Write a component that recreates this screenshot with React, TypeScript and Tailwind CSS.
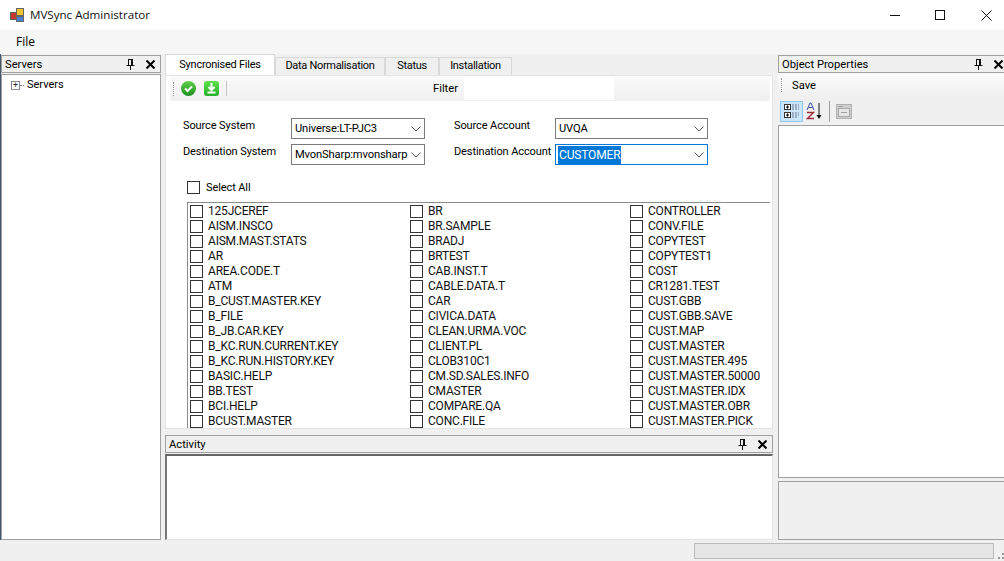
const col1 = ['125JCEREF', 'AISM.INSCO', 'AISM.MAST.STATS', 'AR', 'AREA.CODE.T', 'ATM', 'B_CUST.MASTER.KEY', 'B_FILE', 'B_JB.CAR.KEY', 'B_KC.RUN.CURRENT.KEY', 'B_KC.RUN.HISTORY.KEY', 'BASIC.HELP', 'BB.TEST', 'BCI.HELP', 'BCUST.MASTER']
const col2 = ['BR', 'BR.SAMPLE', 'BRADJ', 'BRTEST', 'CAB.INST.T', 'CABLE.DATA.T', 'CAR', 'CIVICA.DATA', 'CLEAN.URMA.VOC', 'CLIENT.PL', 'CLOB310C1', 'CM.SD.SALES.INFO', 'CMASTER', 'COMPARE.QA', 'CONC.FILE']
const col3 = ['CONTROLLER', 'CONV.FILE', 'COPYTEST', 'COPYTEST1', 'COST', 'CR1281.TEST', 'CUST.GBB', 'CUST.GBB.SAVE', 'CUST.MAP', 'CUST.MASTER', 'CUST.MASTER.495', 'CUST.MASTER.50000', 'CUST.MASTER.IDX', 'CUST.MASTER.OBR', 'CUST.MASTER.PICK']

function PinClose() {
  return (
    <div className="flex items-center gap-[11px]">
      <svg width="9" height="11" viewBox="0 0 9 11" fill="none" stroke="#111">
        <path d="M2.5 1v5M6.5 1v5M2 .5h5M.5 6.5h8M4.5 7v4" />
        <path d="M5.5 1v5" />
      </svg>
      <svg width="9" height="9" viewBox="0 0 9 9" fill="none" stroke="#000" strokeWidth="2">
        <path d="M.5 .5l8 8M8.5 .5l-8 8" />
      </svg>
    </div>
  )
}

function PanelHeader({ title, open }: { title: string; open?: boolean }) {
  return (
    <div className={`flex h-[18px] shrink-0 items-center justify-between border border-[#a0a0a0] bg-[#f0f0f0] pl-[3px] text-[11.2px] text-black ${open ? 'border-r-0 pr-px' : 'pr-[5px]'}`}>
      <span className="pt-[3px]">{title}</span>
      <PinClose />
    </div>
  )
}

function Box() {
  return <span className="block h-[13px] w-[13px] shrink-0 border border-[#333] bg-white" />
}

function FileColumn({ items, width }: { items: string[]; width: string }) {
  return (
    <div className={`flex shrink-0 flex-col ${width}`}>
      {items.map((name) => (
        <div key={name} className="flex h-[15px] items-center gap-[5px] whitespace-nowrap text-[12px] leading-[15px] tracking-[-0.2px] text-[#111]">
          <Box />
          <span>{name}</span>
        </div>
      ))}
    </div>
  )
}

function Combo({ value, width, selected }: { value: string; width: string; selected?: boolean }) {
  return (
    <div className={`flex h-[21px] items-center justify-between whitespace-nowrap bg-white pl-[2px] pr-[3px] text-[11.2px] tracking-[-0.15px] text-black ${width} border ${selected ? 'border-[#0078d7]' : 'border-[#7a7a7a]'}`}>
      {selected ? <span className="bg-[#0078d7] px-px text-[12px] text-white">{value}</span> : <span className="pl-px pt-[2px]">{value}</span>}
      <svg width="10" height="6" viewBox="0 0 10 6" fill="none" stroke="#555">
        <path d="M.5 .5l4.5 4.5 4.5-4.5" />
      </svg>
    </div>
  )
}

function Tab({ label, width }: { label: string; width: string }) {
  return (
    <div className={`flex h-[18px] items-center justify-center border border-b-0 border-[#d9d9d9] bg-[#f0f0f0] text-[11px] tracking-[-0.3px] text-black ${width}`}>
      {label}
    </div>
  )
}

export default function App() {
  return (
    <div className="flex h-[561px] w-[1004px] flex-col overflow-hidden bg-[#f0f0f0] font-['Roboto',sans-serif]">
      {/* title bar */}
      <div className="flex h-[30px] shrink-0 items-center justify-between bg-white">
        <div className="flex items-center gap-[6px] pl-[10px]">
          <svg width="14" height="14" viewBox="0 0 14 14">
            <rect x="0.5" y="4.5" width="6" height="7" fill="#c0392b" stroke="#666" />
            <rect x="6.5" y="0.5" width="7" height="7" fill="#f4c430" stroke="#666" />
            <rect x="6.5" y="8.5" width="7" height="5" fill="#4a80d0" stroke="#666" />
          </svg>
          <span className="font-['Open_Sans',sans-serif] text-[11.6px] text-[#111]">MVSync Administrator</span>
        </div>
        <div className="flex items-center gap-[35px] pr-[12px]">
          <span className="block h-px w-[10px] bg-[#111]" />
          <span className="block h-[10px] w-[10px] border border-[#111]" />
          <svg className="ml-px" width="11" height="11" viewBox="0 0 11 11" stroke="#111" fill="none">
            <path d="M.5 .5l10 10M10.5 .5l-10 10" />
          </svg>
        </div>
      </div>

      {/* menu */}
      <div className="flex h-[24px] shrink-0 items-center bg-[#f6f6f6] pl-[16px] font-['Open_Sans',sans-serif] text-[12px] text-black">File</div>

      {/* body */}
      <div className="flex min-h-0 flex-1 bg-[#f0f0f0]">
        <div className="w-px shrink-0 bg-[#44586b]" />

        {/* servers */}
        <div className="flex w-[160px] shrink-0 flex-col pt-px">
          <PanelHeader title="Servers" />
          <div className="mt-px flex-1 border border-[#a0a0a0] bg-white pl-[9px] pt-[3px]">
            <div className="flex items-center text-[11px] leading-[14px] text-black">
              <span className="flex h-[9px] w-[9px] items-center justify-center border border-[#8a8a9a] text-[9px] leading-none text-[#333]">+</span>
              <span className="w-[4px] border-t border-dotted border-[#888]" />
              <span className="pl-[3px]">Servers</span>
            </div>
          </div>
        </div>

        {/* centre */}
        <div className="ml-[4px] flex w-[608px] shrink-0 flex-col">
          <div className="flex h-[21px] shrink-0 items-end pt-px">
            <div className="flex h-[21px] w-[110px] items-center justify-center border border-b-0 border-[#d9d9d9] bg-white text-[11px] tracking-[-0.25px] text-black">Syncronised Files</div>
            <Tab label="Data Normalisation" width="w-[110px]" />
            <Tab label="Status" width="w-[54px]" />
            <Tab label="Installation" width="w-[73px]" />
          </div>

          <div className="flex h-[354px] shrink-0 flex-col overflow-hidden border border-[#e4e4e4] bg-white pl-[4px] pr-[2px]">
            {/* toolbar */}
            <div className="flex h-[25px] shrink-0 items-center rounded-b-[3px] bg-gradient-to-b from-[#fbfbfb] to-[#efefef] pl-[3px]">
              <span className="mr-[7px] h-[14px] w-px border-l border-dotted border-[#999]" />
              <svg width="15" height="15" viewBox="0 0 15 15">
                <defs>
                  <linearGradient id="okFill" x1="0" y1="0" x2="0" y2="1">
                    <stop offset="0" stopColor="#5fd04a" />
                    <stop offset="1" stopColor="#1d8f22" />
                  </linearGradient>
                </defs>
                <circle cx="7.5" cy="7.5" r="7.5" fill="url(#okFill)" />
                <path d="M4 7.5l2.5 2.5L11 5.5" stroke="#fff" strokeWidth="2" fill="none" />
              </svg>
              <svg className="ml-[8px]" width="15" height="15" viewBox="0 0 15 15">
                <defs>
                  <linearGradient id="dlFill" x1="0" y1="0" x2="0" y2="1">
                    <stop offset="0" stopColor="#5fe04a" />
                    <stop offset="1" stopColor="#24b02a" />
                  </linearGradient>
                </defs>
                <rect width="15" height="15" rx="3" fill="url(#dlFill)" />
                <path d="M7.5 2v6M4.5 6l3 3 3-3M3.5 11.5h8" stroke="#fff" strokeWidth="2" fill="none" />
              </svg>
              <span className="ml-[7px] h-[15px] w-px bg-[#c4c4c4]" />
              <span className="ml-[206px] w-[31px] pt-px text-[11.2px] text-black">Filter</span>
              <span className="h-[24px] w-[150px] self-start bg-white" />
            </div>

            {/* form */}
            <div className="flex h-[101px] shrink-0 flex-col pl-[13px] text-[11px] tracking-[-0.1px] text-black">
              <div className="mt-[17px] flex gap-x-[29px] whitespace-nowrap">
                <div className="flex flex-col gap-[5px]">
                  <div className="flex">
                    <span className="w-[108px]">Source System</span>
                    <Combo value="Universe:LT-PJC3" width="w-[134px]" />
                  </div>
                  <div className="flex">
                    <span className="w-[108px]">Destination System</span>
                    <Combo value="MvonSharp:mvonsharp" width="w-[134px]" />
                  </div>
                </div>
                <div className="flex flex-col gap-[5px]">
                  <div className="flex">
                    <span className="w-[101px]">Source Account</span>
                    <Combo value="UVQA" width="w-[153px]" />
                  </div>
                  <div className="flex">
                    <span className="w-[101px]">Destination Account</span>
                    <Combo value="CUSTOMER" width="w-[153px]" selected />
                  </div>
                </div>
              </div>
              <div className="ml-[4px] mt-[14px] flex items-center gap-[6px]">
                <Box />
                <span className="pt-px">Select All</span>
              </div>
            </div>

            {/* file list */}
            <div className="ml-[17px] flex min-h-0 flex-1 overflow-hidden border-l border-t border-[#8c8c8c] pl-[2px] pt-px">
              <FileColumn items={col1} width="w-[220px]" />
              <FileColumn items={col2} width="w-[220px]" />
              <FileColumn items={col3} width="w-[140px]" />
            </div>
          </div>

          {/* activity */}
          <div className="mt-[6px] flex min-h-0 flex-1 flex-col">
            <PanelHeader title="Activity" />
            <div className="mt-px flex-1 border-l-2 border-t-2 border-r border-b border-l-[#777] border-t-[#666] border-r-[#e4e4e4] border-b-[#e4e4e4] bg-white" />
          </div>
        </div>

        {/* properties */}
        <div className="ml-[5px] flex min-w-0 flex-1 flex-col pt-px">
          <PanelHeader title="Object Properties" open />
          <div className="flex h-[24px] shrink-0 items-center bg-gradient-to-b from-[#fbfbfb] to-[#f0f0f0] pl-[3px] text-[11.2px] text-black">
            <span className="h-[14px] border-l border-dotted border-[#999]" />
            <span className="pl-[10px] pt-[2px]">Save</span>
          </div>
          <div className="flex h-[28px] shrink-0 items-center bg-[#f0f0f0] pl-[2px]">
            <span className="flex h-[21px] w-[23px] items-center justify-center border border-[#90c8f6] bg-[#cce4f7]">
              <svg width="16" height="16" viewBox="0 0 16 16" fill="none">
                <rect x="0.5" y="1.5" width="6" height="5" fill="#fff" stroke="#333" />
                <rect x="0.5" y="9.5" width="6" height="5" fill="#fff" stroke="#333" />
                <path d="M2 4h3M3.5 2.5v3M2 12h3M3.5 10.5v3" stroke="#000" />
                <path d="M8 2h7M8 4h7M8 6h7M8 10h7M8 12h7M8 14h5" stroke="#6a7a8a" strokeDasharray="2 1" />
              </svg>
            </span>
            <svg className="ml-[3px]" width="17" height="18" viewBox="0 0 17 18" fill="none">
              <path d="M1 8l3-7h1l3 7M2.5 5.5h4" stroke="#3c4fa8" />
              <path d="M1 10.5h6.5L1.5 16.5H8" stroke="#9b2c3a" strokeWidth="1.4" />
              <path d="M13 1v14" stroke="#111" />
              <path d="M10.5 13l2.5 4 2.5-4z" fill="#111" />
            </svg>
            <span className="ml-[6px] h-[21px] w-px bg-[#a0a0a0]" />
            <svg className="ml-[6px]" width="16" height="15" viewBox="0 0 16 15" fill="none">
              <rect x="0.5" y="0.5" width="15" height="14" fill="#cfcfcf" stroke="#b0b0b0" />
              <rect x="2.5" y="4.5" width="11" height="8" fill="#e6e6e6" stroke="#a8a8a8" />
              <path d="M2 2.5h5M5 8.5h6" stroke="#a0a0a0" />
            </svg>
          </div>
          <div className="h-[353px] shrink-0 border border-r-0 border-[#a0a0a0] bg-white" />
          <div className="mt-[3px] flex-1 border border-r-0 border-[#a0a0a0] bg-[#f0f0f0]" />
        </div>
      </div>

      {/* status bar */}
      <div className="flex h-[21px] shrink-0 items-center bg-[#f0f0f0] pl-[694px]">
        <div className="h-[16px] w-[300px] border border-[#bcbcbc] bg-[#e6e6e6]" />
        <svg className="ml-[4px] mt-[10px]" width="6" height="6" viewBox="0 0 6 6" fill="#9a9a9a">
          <rect x="4" y="0" width="2" height="2" />
          <rect x="0" y="4" width="2" height="2" />
          <rect x="4" y="4" width="2" height="2" />
        </svg>
      </div>
    </div>
  )
}
